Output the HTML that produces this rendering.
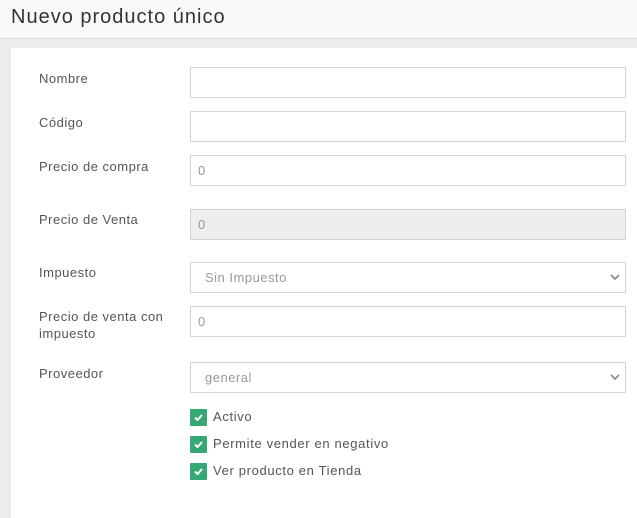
<!DOCTYPE html>
<html><head><meta charset="utf-8"><style>
*{box-sizing:border-box;margin:0;padding:0}
body{width:637px;height:510px;overflow:hidden;background:#ececec;font-family:"Liberation Sans",sans-serif;color:#555;position:relative}
.hdr{position:absolute;left:0;top:0;width:637px;height:39px;background:#f9f9f9;border-bottom:1px solid #ddd}
.hdr h1{position:absolute;left:11px;top:6px;font-size:20px;font-weight:normal;color:#333;letter-spacing:1px}
.panel{position:absolute;left:11px;top:48px;width:626px;height:470px;background:#fff}
.lbl{position:absolute;left:39px;font-size:13px;color:#555;line-height:17px;letter-spacing:0.5px}
.in{position:absolute;left:190px;width:436px;height:31px;border:1px solid #d5d5d5;background:#fff;font-size:13px;color:#999;padding:7px 0 0 7px;letter-spacing:0.5px}
.sel{padding-left:14px}
.sel svg{position:absolute;right:5px;top:11px}
.cb{position:absolute;left:190px;width:17px;height:17px;background:#36a874;border-radius:1px}
.cb svg{position:absolute;left:4px;top:5px}
.ct{position:absolute;left:213px;font-size:13px;color:#555;letter-spacing:0.65px}
</style></head><body>
<div class="hdr"><h1>Nuevo producto único</h1></div>
<div class="panel"></div>
<div class="lbl" style="top:70px">Nombre</div>
<div class="in" style="top:67px"></div>
<div class="lbl" style="top:114px">Código</div>
<div class="in" style="top:111px"></div>
<div class="lbl" style="top:158px">Precio de compra</div>
<div class="in" style="top:155px">0</div>
<div class="lbl" style="top:211px">Precio de Venta</div>
<div class="in" style="top:209px;background:#eee">0</div>
<div class="lbl" style="top:264px">Impuesto</div>
<div class="in sel" style="top:262px">Sin Impuesto<svg width="10" height="7" viewBox="0 0 10 7"><path d="M1 1l4 4 4-4" stroke="#888" stroke-width="1.6" fill="none"/></svg></div>
<div class="lbl" style="top:308px">Precio de venta con<br>impuesto</div>
<div class="in" style="top:306px">0</div>
<div class="lbl" style="top:365px">Proveedor</div>
<div class="in sel" style="top:362px">general<svg width="10" height="7" viewBox="0 0 10 7"><path d="M1 1l4 4 4-4" stroke="#888" stroke-width="1.6" fill="none"/></svg></div>
<div class="cb" style="top:409px"><svg width="9" height="7" viewBox="0 0 9 7"><path d="M1 3.5l2.5 2.5 4.5-5" stroke="#fff" stroke-width="2" fill="none"/></svg></div>
<div class="ct" style="top:409px">Activo</div>
<div class="cb" style="top:436px"><svg width="9" height="7" viewBox="0 0 9 7"><path d="M1 3.5l2.5 2.5 4.5-5" stroke="#fff" stroke-width="2" fill="none"/></svg></div>
<div class="ct" style="top:436px">Permite vender en negativo</div>
<div class="cb" style="top:463px"><svg width="9" height="7" viewBox="0 0 9 7"><path d="M1 3.5l2.5 2.5 4.5-5" stroke="#fff" stroke-width="2" fill="none"/></svg></div>
<div class="ct" style="top:463px">Ver producto en Tienda</div>
</body></html>
